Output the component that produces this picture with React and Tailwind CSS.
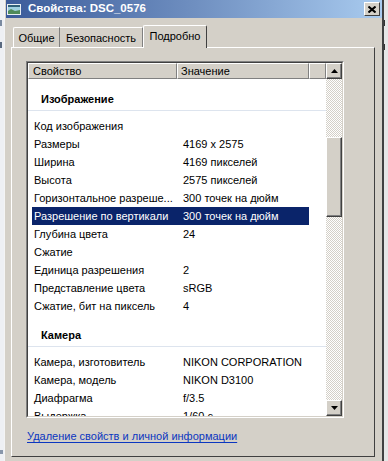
const imageRows = [
  ["Код изображения", ""],
  ["Размеры", "4169 x 2575"],
  ["Ширина", "4169 пикселей"],
  ["Высота", "2575 пикселей"],
  ["Горизонтальное разреше...", "300 точек на дюйм"],
  ["Разрешение по вертикали", "300 точек на дюйм", true],
  ["Глубина цвета", "24"],
  ["Сжатие", ""],
  ["Единица разрешения", "2"],
  ["Представление цвета", "sRGB"],
  ["Сжатие, бит на пиксель", "4"],
];

const cameraRows = [
  ["Камера, изготовитель", "NIKON CORPORATION"],
  ["Камера, модель", "NIKON D3100"],
  ["Диафрагма", "f/3.5"],
  ["Выдержка", "1/60 с."],
];

function Row({ name, value, selected }) {
  return (
    <div
      className={`ml-[4px] flex h-[18px] w-[277px] shrink-0 items-center ${
        selected ? "bg-[#0a246a] text-white" : "text-black"
      }`}
    >
      <div className="w-[151px] shrink-0 whitespace-nowrap pl-[2px]">{name}</div>
      <div className="whitespace-nowrap">{value}</div>
    </div>
  );
}

function Group({ title }) {
  return (
    <div className="flex h-[32px] shrink-0 items-end border-b border-[#dde4ee] pb-[5px] pl-[13px] font-bold">
      {title}
    </div>
  );
}

function ScrollButton({ down }) {
  return (
    <div className="flex h-[16px] w-[16px] shrink-0 items-center justify-center border border-t-white border-l-white border-r-[#404040] border-b-[#404040] bg-[#d4d0c8] shadow-[inset_-1px_-1px_0_#808080]">
      <svg width="7" height="4" viewBox="0 0 7 4">
        {down ? <path d="M0 0h7L3.5 4z" fill="#000" /> : <path d="M0 4h7L3.5 0z" fill="#000" />}
      </svg>
    </div>
  );
}

export default function App() {
  return (
    <div className="flex h-[461px] w-[388px] overflow-hidden bg-[#eef0f4] font-['Liberation_Sans',Arial,sans-serif] text-[11px] leading-none">
      <div className="relative w-[4px] shrink-0">
        <div className="absolute left-0 top-[20px] h-[6px] w-[2px] bg-[#7a8aa0]" />
        <div className="absolute left-0 top-[42px] h-[6px] w-[2px] bg-[#5a6a80]" />
        <div className="absolute left-0 top-[450px] h-[4px] w-[3px] bg-[#8896aa]" />
      </div>

      <div className="flex w-[380px] shrink-0 flex-col border-l border-r-2 border-l-[#f4f4f4] border-r-[#404040] bg-[#d4d0c8] pl-[1px]">
        <div className="flex h-[18px] shrink-0 items-center bg-gradient-to-r from-[#3b5b9a] via-[#6f8fc0] to-[#a9cbef] pr-[1px]">
          <svg width="14" height="11" viewBox="0 0 14 11" className="ml-[1px]">
            <rect x="0" y="0" width="14" height="11" fill="#e8eef2" />
            <rect x="1" y="1" width="12" height="9" fill="#9fd0e0" />
            <rect x="1" y="1" width="12" height="2" fill="#2f5f78" />
            <path d="M1 10V7l3-2 4 2 5-1v4z" fill="#4f8a5a" />
          </svg>
          <span className="ml-[7px] text-[11.5px] font-bold text-white">Свойства: DSC_0576</span>
          <div className="ml-auto mr-[1px] flex h-[14px] w-[16px] items-center justify-center border border-t-white border-l-white border-r-[#404040] border-b-[#404040] bg-[#d4d0c8]">
            <svg width="8" height="7" viewBox="0 0 8 7">
              <path d="M0.5 0.5l7 6M7.5 0.5l-7 6" stroke="#000" strokeWidth="2" />
            </svg>
          </div>
        </div>

        <div className="ml-[5px] mt-[7px] flex h-[22px] shrink-0 items-end pl-[2px]">
          <div className="flex h-[20px] w-[47px] items-center justify-center rounded-tl-[2px] border-l border-t border-l-white border-t-white border-r border-r-[#808080] pt-[2px]">
            Общие
          </div>
          <div className="flex h-[20px] w-[83px] items-center justify-center border-t border-t-white border-r border-r-[#808080] pt-[2px]">
            Безопасность
          </div>
          <div className="relative z-10 -mb-px flex h-[23px] w-[64px] items-start justify-center rounded-t-[2px] border-l border-r border-t border-l-white border-t-white border-r-[#404040] bg-[#d4d0c8] pt-[5px]">
            Подробно
          </div>
        </div>

        <div className="ml-[5px] flex h-[410px] w-[364px] shrink-0 flex-col border border-t-white border-l-white border-r-[#404040] border-b-[#404040] pl-[14px] pt-[13px]">
          <div className="flex h-[357px] w-[318px] shrink-0 border border-t-[#808080] border-l-[#808080] border-r-white border-b-white">
            <div className="flex flex-1 border border-t-[#404040] border-l-[#404040] border-r-[#d4d0c8] border-b-[#d4d0c8] bg-white">
              <div className="flex min-w-0 flex-1 flex-col overflow-hidden">
                <div className="flex h-[16px] shrink-0 bg-[#d4d0c8]">
                  <div className="flex w-[149px] items-center border border-t-white border-l-white border-r-[#808080] border-b-[#808080] pl-[4px]">
                    Свойство
                  </div>
                  <div className="flex w-[132px] items-center border border-t-white border-l-white border-r-[#808080] border-b-[#808080] pl-[3px]">
                    Значение
                  </div>
                  <div className="flex-1 border border-t-white border-l-white border-r-[#808080] border-b-[#808080]" />
                </div>
                <Group title="Изображение" />
                <div className="flex shrink-0 flex-col pt-[6px]">
                  {imageRows.map(([n, v, s]) => (
                    <Row key={n} name={n} value={v} selected={s} />
                  ))}
                </div>
                <Group title="Камера" />
                <div className="flex shrink-0 flex-col pt-[6px]">
                  {cameraRows.map(([n, v]) => (
                    <Row key={n} name={n} value={v} />
                  ))}
                </div>
              </div>
              <div className="flex w-[16px] shrink-0 flex-col">
                <ScrollButton />
                <div className="h-[58px] shrink-0 bg-[repeating-conic-gradient(#d4d0c8_0_25%,#ffffff_0_50%)] bg-[length:2px_2px]" />
                <div className="h-[80px] shrink-0 border border-t-white border-l-white border-r-[#404040] border-b-[#404040] bg-[#d4d0c8] shadow-[inset_-1px_-1px_0_#808080]" />
                <div className="flex-1 bg-[repeating-conic-gradient(#d4d0c8_0_25%,#ffffff_0_50%)] bg-[length:2px_2px]" />
                <ScrollButton down />
              </div>
            </div>
          </div>
          <a className="ml-px mt-[13px] text-[#0b36c0] underline underline-offset-2">
            Удаление свойств и личной информации
          </a>
        </div>
      </div>

      <div className="relative flex-1 bg-[#e6e6e6]">
        <div className="absolute left-0 top-[20px] h-[6px] w-[1px] bg-[#333]" />
        <div className="absolute left-0 top-[44px] h-[6px] w-[1px] bg-[#333]" />
      </div>
    </div>
  );
}
